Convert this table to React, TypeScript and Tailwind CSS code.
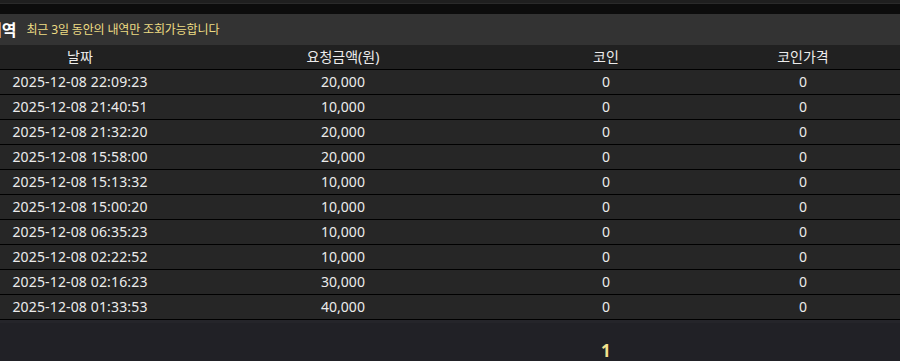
import React from 'react';

const rows = [
    { date: '2025-12-08 22:09:23', amount: '20,000', coin: '0', price: '0' },
    { date: '2025-12-08 21:40:51', amount: '10,000', coin: '0', price: '0' },
    { date: '2025-12-08 21:32:20', amount: '20,000', coin: '0', price: '0' },
    { date: '2025-12-08 15:58:00', amount: '20,000', coin: '0', price: '0' },
    { date: '2025-12-08 15:13:32', amount: '10,000', coin: '0', price: '0' },
    { date: '2025-12-08 15:00:20', amount: '10,000', coin: '0', price: '0' },
    { date: '2025-12-08 06:35:23', amount: '10,000', coin: '0', price: '0' },
    { date: '2025-12-08 02:22:52', amount: '10,000', coin: '0', price: '0' },
    { date: '2025-12-08 02:16:23', amount: '30,000', coin: '0', price: '0' },
    { date: '2025-12-08 01:33:53', amount: '40,000', coin: '0', price: '0' },
];

const Row = ({ cells, header }: { cells: string[]; header?: boolean }) => {
    return (
        <div
            className={`grid grid-cols-[160px_366px_160px_1fr] h-[25px] items-center border-b border-black ${
                header ? 'bg-[#212121]' : 'bg-[#262626]'
            }`}
        >
            {cells.map((c, i) => (
                <div key={i} className={`text-center ${i === 0 && !header ? 'tracking-[0.15px]' : ''} ${i === 3 ? 'pl-5' : ''}`}>
                    {c}
                </div>
            ))}
        </div>
    );
};

const App = () => {
    return (
        <div className="w-[900px] h-[361px] overflow-hidden bg-[#212126] text-[14px] leading-none text-[#ececec] [font-family:'Noto_Sans','Noto_Sans_CJK_KR',sans-serif]">
            <div className="h-[4px] bg-[#1f1f1f] border-b border-[#2a2a2a]" />
            <div className="h-[10px] bg-[#0c0c0c]" />
            <div className="h-[31px] bg-[#333333] flex items-center gap-[10px]">
                <span className="-ml-[13px] text-[16px] font-bold text-white">내역</span>
                <span className="text-[12px] text-[#eedc84] tracking-[-0.15px]">최근 3일 동안의 내역만 조회가능합니다</span>
            </div>
            <Row header cells={['날짜', '요청금액(원)', '코인', '코인가격']} />
            {rows.map((r, i) => (
                <Row key={i} cells={[r.date, r.amount, r.coin, r.price]} />
            ))}
            <div className="h-[3px] bg-[#25252a]" />
            <div className="pl-[601px] pt-[19px] text-[17px] leading-none font-bold text-[#f3e38f]">1</div>
        </div>
    );
};

export default App;
